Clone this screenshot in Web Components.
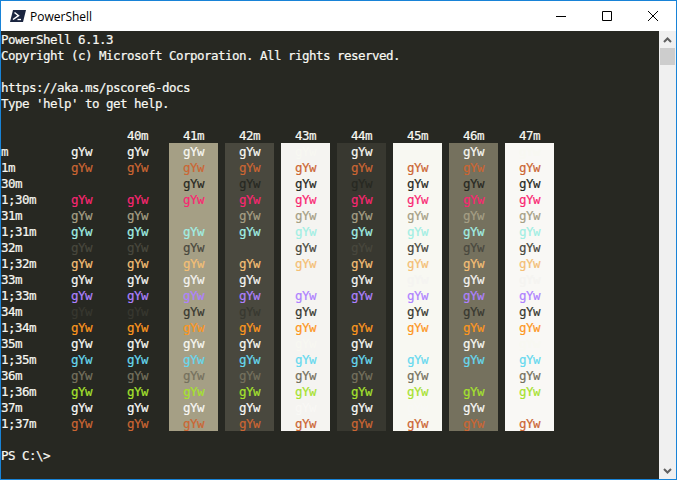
<!DOCTYPE html>
<html>
<head>
<meta charset="utf-8">
<title>PowerShell</title>
<style>
    html, body { margin: 0; padding: 0; height: 100%; overflow: hidden; background: #272822; }
</style>
</head>
<body>
<ps-window>
    <title-bar slot="title">PowerShell</title-bar>
    <console-view>
        <pre-line>PowerShell 6.1.3</pre-line>
        <pre-line>Copyright (c) Microsoft Corporation. All rights reserved.</pre-line>
        <pre-line></pre-line>
        <pre-line>https://aka.ms/pscore6-docs</pre-line>
        <pre-line>Type 'help' to get help.</pre-line>
        <pre-line></pre-line>
        <color-table></color-table>
        <pre-line></pre-line>
        <pre-line>PS C:\&gt;</pre-line>
    </console-view>
    <scroll-bar slot="scroll"></scroll-bar>
</ps-window>
<script>
class PsWindow extends HTMLElement {
    constructor() {
        super();
        this.attachShadow({ mode: 'open' });
        this.shadowRoot.innerHTML = `
            <style>
                :host {
                    display: flex;
                    flex-direction: column;
                    box-sizing: border-box;
                    width: 677px;
                    height: 480px;
                    border: 1px solid #1883d7;
                    background: #272822;
                }
                .body {
                    display: flex;
                    flex: 1;
                    min-height: 0;
                }
            </style>
            <slot name="title"></slot>
            <div class="body">
                <slot></slot>
                <slot name="scroll"></slot>
            </div>
        `;
    }
}

class TitleBar extends HTMLElement {
    constructor() {
        super();
        this.attachShadow({ mode: 'open' });
        this.shadowRoot.innerHTML = `
            <style>
                :host {
                    display: flex;
                    align-items: center;
                    flex: none;
                    height: 30px;
                    background: #ffffff;
                    color: #000000;
                    font-family: 'Open Sans', 'Noto Sans', sans-serif;
                    font-size: 12px;
                }
                .icon { display: block; margin-left: 9px; margin-right: 4px; }
                .name { flex: 1; }
                .btn {
                    display: flex;
                    align-items: center;
                    justify-content: center;
                    width: 46px;
                    height: 30px;
                }
            </style>
            <svg class="icon" width="16" height="16" viewBox="0 0 16 16">
                <path fill="#1a2540" d="M3 2h13l-3 12H0z"/>
                <path fill="none" stroke="#ffffff" stroke-width="1.5" d="M4.5 4.5l4 3.2-5.5 3.8"/>
                <path fill="none" stroke="#ffffff" stroke-width="1.3" d="M7.5 11.5h3.5"/>
            </svg>
            <span class="name"><slot></slot></span>
            <div class="btn"><svg width="10" height="10" viewBox="0 0 10 10"><path stroke="#000" fill="none" d="M0 5.5h10"/></svg></div>
            <div class="btn"><svg width="10" height="10" viewBox="0 0 10 10"><path stroke="#000" fill="none" d="M.5.5h9v9h-9z"/></svg></div>
            <div class="btn"><svg width="10" height="10" viewBox="0 0 10 10"><path stroke="#000" fill="none" d="M0 0l10 10M10 0L0 10"/></svg></div>
        `;
    }
}

class ConsoleView extends HTMLElement {
    constructor() {
        super();
        this.attachShadow({ mode: 'open' });
        // line-height is 2px over the 16px row, it drops the text 1px inside its row
        this.shadowRoot.innerHTML = `
            <style>
                :host {
                    display: block;
                    flex: 1;
                    min-width: 0;
                    background: #272822;
                    color: #f8f8f2;
                    font-family: 'DejaVu Sans Mono', 'Liberation Mono', monospace;
                    font-size: 12.5px;
                    letter-spacing: -0.525px;
                    line-height: 18px;
                    -webkit-text-stroke: 0.2px;
                }
            </style>
            <slot></slot>
        `;
    }
}

class PreLine extends HTMLElement {
    constructor() {
        super();
        this.attachShadow({ mode: 'open' });
        // no whitespace in this root: white-space: pre would print it
        this.shadowRoot.innerHTML = `<style>:host { display: block; height: 16px; white-space: pre; }</style><slot></slot>`;
    }
}

class ColorTable extends HTMLElement {
    constructor() {
        super();
        this.attachShadow({ mode: 'open' });
        this.backs = [
            { code: '', color: 'transparent' },
            { code: '40m', color: 'transparent' },
            { code: '41m', color: '#a59f85' },
            { code: '42m', color: '#49483e' },
            { code: '43m', color: '#f5f4f1' },
            { code: '44m', color: '#383830' },
            { code: '45m', color: '#f8f8f2' },
            { code: '46m', color: '#75715e' },
            { code: '47m', color: '#f9f8f5' }
        ];
        this.fores = [
            { code: 'm', color: '#f8f8f2' },
            { code: '1m', color: '#cc6633' },
            { code: '30m', color: '#272822' },
            { code: '1;30m', color: '#f92672' },
            { code: '31m', color: '#a59f85' },
            { code: '1;31m', color: '#a1efe4' },
            { code: '32m', color: '#49483e' },
            { code: '1;32m', color: '#f4bf75' },
            { code: '33m', color: '#f5f4f1' },
            { code: '1;33m', color: '#ae81ff' },
            { code: '34m', color: '#383830' },
            { code: '1;34m', color: '#fd971f' },
            { code: '35m', color: '#f8f8f2' },
            { code: '1;35m', color: '#66d9ef' },
            { code: '36m', color: '#75715e' },
            { code: '1;36m', color: '#a6e22e' },
            { code: '37m', color: '#f9f8f5' },
            { code: '1;37m', color: '#cc6633' }
        ];
    }

    connectedCallback() {
        this.render();
    }

    render() {
        this.shadowRoot.innerHTML = `
            <style>
                :host {
                    display: grid;
                    grid-template-columns: repeat(10, 49px);
                    grid-auto-rows: 16px;
                    column-gap: 7px;
                }
                .cell { padding-left: 14px; }
            </style>
            <div></div>
            ${this.backs.map(b => `<div class="cell">${b.code}</div>`).join('')}
            ${this.fores.map(f => `
                <div>${f.code}</div>
                ${this.backs.map(b => `<div class="cell" style="background:${b.color};color:${f.color}">gYw</div>`).join('')}
            `).join('')}
        `;
    }
}

class ScrollBar extends HTMLElement {
    constructor() {
        super();
        this.attachShadow({ mode: 'open' });
        this.shadowRoot.innerHTML = `
            <style>
                :host {
                    display: flex;
                    flex-direction: column;
                    flex: none;
                    width: 17px;
                    background: #f0f0f0;
                }
                .arrow {
                    display: flex;
                    align-items: center;
                    justify-content: center;
                    flex: none;
                    height: 17px;
                }
                .thumb {
                    flex: none;
                    width: 15px;
                    height: 17px;
                    margin-left: 1px;
                    background: #cdcdcd;
                }
                .track { flex: 1; }
            </style>
            <div class="arrow"><svg width="9" height="6" viewBox="0 0 9 6"><path fill="none" stroke="#606060" stroke-width="2" d="M1 5l3.5-3.5L8 5"/></svg></div>
            <div class="thumb"></div>
            <div class="track"></div>
            <div class="arrow"><svg width="9" height="6" viewBox="0 0 9 6"><path fill="none" stroke="#606060" stroke-width="2" d="M1 1l3.5 3.5L8 1"/></svg></div>
        `;
    }
}

customElements.define('ps-window', PsWindow);
customElements.define('title-bar', TitleBar);
customElements.define('console-view', ConsoleView);
customElements.define('pre-line', PreLine);
customElements.define('color-table', ColorTable);
customElements.define('scroll-bar', ScrollBar);
</script>
</body>
</html>
